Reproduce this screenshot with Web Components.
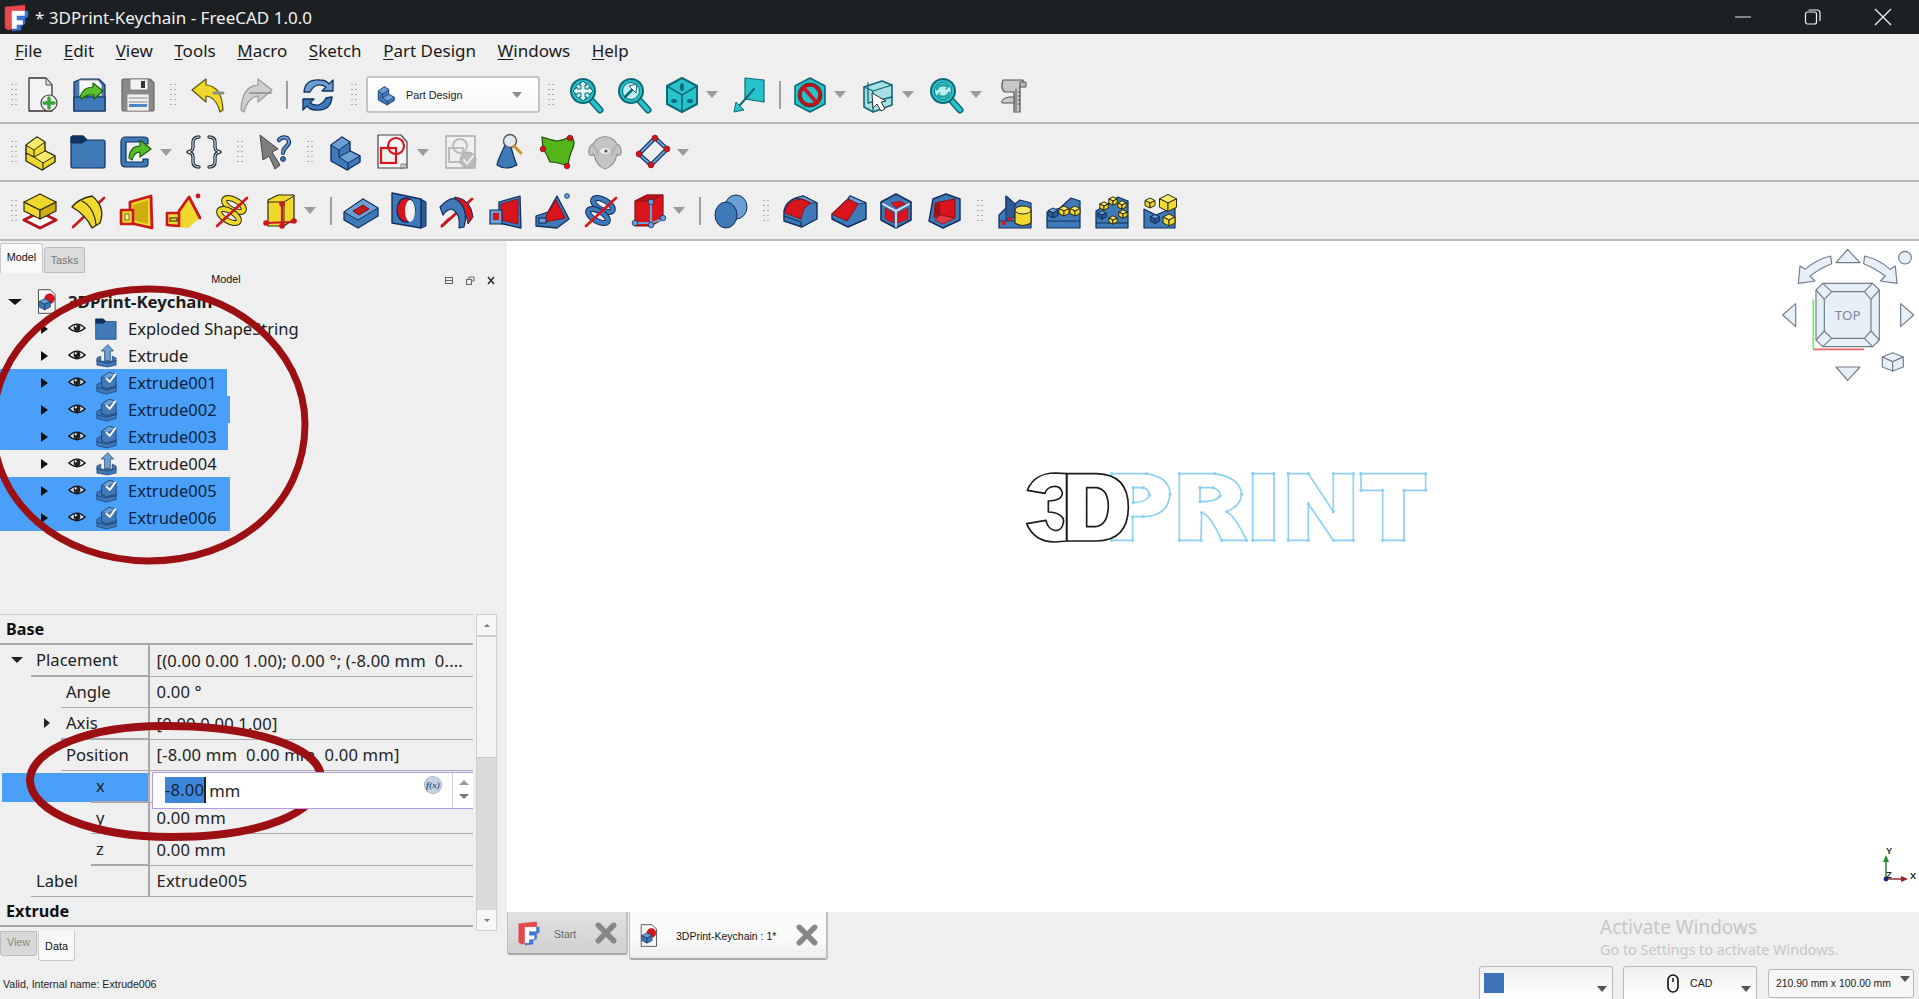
<!DOCTYPE html>
<html>
<head>
<meta charset="utf-8">
<title>FreeCAD</title>
<style>
  html, body { margin: 0; height: 100%; overflow: hidden; background: #efefef; }
  body { display: flex; flex-direction: column; font-family: "Noto Sans", "Liberation Sans", sans-serif; color: #111; }
  .main { display: flex; flex: 1; min-height: 0; }
  .center { display: flex; flex-direction: column; flex: 1; min-width: 0; }
</style>
</head>
<body>
<fc-titlebar title-text="* 3DPrint-Keychain - FreeCAD 1.0.0"></fc-titlebar>
<fc-menubar items="File,Edit,View,Tools,Macro,Sketch,Part Design,Windows,Help"></fc-menubar>

<fc-toolbar pad="18" h="57">
  <fc-tool icon="new"></fc-tool><fc-tool icon="open"></fc-tool><fc-tool icon="save"></fc-tool>
  <fc-handle w="22"></fc-handle>
  <fc-tool icon="undo"></fc-tool><fc-tool icon="redo"></fc-tool>
  <fc-sep w="14"></fc-sep>
  <fc-tool icon="refresh"></fc-tool>
  <fc-handle w="24"></fc-handle>
  <fc-combo text="Part Design"></fc-combo>
  <fc-handle w="22"></fc-handle>
  <fc-tool icon="fit"></fc-tool><fc-tool icon="fitsel"></fc-tool><fc-tool icon="iso" drop></fc-tool><fc-tool icon="plane"></fc-tool>
  <fc-sep w="12"></fc-sep>
  <fc-tool icon="noshow" drop></fc-tool><fc-tool icon="boxsel" drop></fc-tool><fc-tool icon="syncview" drop></fc-tool><fc-tool icon="measure"></fc-tool>
</fc-toolbar>

<fc-toolbar pad="16" h="58">
  <fc-tool icon="part"></fc-tool><fc-tool icon="group"></fc-tool><fc-tool icon="link" drop></fc-tool><fc-tool icon="braces"></fc-tool>
  <fc-handle w="23"></fc-handle>
  <fc-tool icon="whatsthis"></fc-tool>
  <fc-handle w="22"></fc-handle>
  <fc-tool icon="body"></fc-tool><fc-tool icon="sketch" drop></fc-tool><fc-tool icon="attach"></fc-tool><fc-tool icon="datum"></fc-tool><fc-tool icon="green"></fc-tool><fc-tool icon="sheep"></fc-tool><fc-tool icon="diamond" drop></fc-tool>
</fc-toolbar>

<fc-toolbar pad="16" h="59">
  <fc-tool icon="pad"></fc-tool><fc-tool icon="revolve"></fc-tool><fc-tool icon="loft"></fc-tool><fc-tool icon="pipe"></fc-tool><fc-tool icon="helix"></fc-tool><fc-tool icon="prim" drop></fc-tool>
  <fc-sep w="13"></fc-sep>
  <fc-tool icon="pocket"></fc-tool><fc-tool icon="hole"></fc-tool><fc-tool icon="groove"></fc-tool><fc-tool icon="subloft"></fc-tool><fc-tool icon="subpipe"></fc-tool><fc-tool icon="subhelix"></fc-tool><fc-tool icon="subprim" drop></fc-tool>
  <fc-sep w="14"></fc-sep>
  <fc-tool icon="boolean"></fc-tool>
  <fc-handle w="21"></fc-handle>
  <fc-tool icon="fillet"></fc-tool><fc-tool icon="chamfer"></fc-tool><fc-tool icon="draft"></fc-tool><fc-tool icon="thick"></fc-tool>
  <fc-handle w="24"></fc-handle>
  <fc-tool icon="mirror"></fc-tool><fc-tool icon="linear"></fc-tool><fc-tool icon="polar"></fc-tool><fc-tool icon="multi"></fc-tool>
</fc-toolbar>

<div class="main">
  <fc-panel>
    <fc-tree-row slot="tree" root icon="doc" text="3DPrint-Keychain"></fc-tree-row>
    <fc-tree-row slot="tree" icon="folder" text="Exploded ShapeString"></fc-tree-row>
    <fc-tree-row slot="tree" icon="extrude" text="Extrude"></fc-tree-row>
    <fc-tree-row slot="tree" icon="extrudeok" text="Extrude001" sel="227"></fc-tree-row>
    <fc-tree-row slot="tree" icon="extrudeok" text="Extrude002" sel="230"></fc-tree-row>
    <fc-tree-row slot="tree" icon="extrudeok" text="Extrude003" sel="228"></fc-tree-row>
    <fc-tree-row slot="tree" icon="extrude" text="Extrude004"></fc-tree-row>
    <fc-tree-row slot="tree" icon="extrudeok" text="Extrude005" sel="230"></fc-tree-row>
    <fc-tree-row slot="tree" icon="extrudeok" text="Extrude006" sel="230"></fc-tree-row>

    <fc-prop-row slot="props" group label="Base"></fc-prop-row>
    <fc-prop-row slot="props" label="Placement" indent="31" arrow="open" value="[(0.00 0.00 1.00); 0.00 °; (-8.00 mm  0...."></fc-prop-row>
    <fc-prop-row slot="props" label="Angle" indent="61" value="0.00 °"></fc-prop-row>
    <fc-prop-row slot="props" label="Axis" indent="61" arrow="closed" value="[0.00 0.00 1.00]"></fc-prop-row>
    <fc-prop-row slot="props" label="Position" indent="61" value="[-8.00 mm  0.00 mm  0.00 mm]"></fc-prop-row>
    <fc-prop-row slot="props" label="x" indent="91" selected><fc-spin-edit value="-8.00" unit="mm"></fc-spin-edit></fc-prop-row>
    <fc-prop-row slot="props" label="y" indent="91" value="0.00 mm"></fc-prop-row>
    <fc-prop-row slot="props" label="z" indent="91" value="0.00 mm"></fc-prop-row>
    <fc-prop-row slot="props" label="Label" indent="31" value="Extrude005"></fc-prop-row>
    <fc-prop-row slot="props" group label="Extrude"></fc-prop-row>
  </fc-panel>
  <div class="center">
    <fc-viewport></fc-viewport>
    <fc-doc-tabs>
      <fc-doc-tab icon="logo" text="Start"></fc-doc-tab>
      <fc-doc-tab icon="doc" text="3DPrint-Keychain : 1*" active></fc-doc-tab>
    </fc-doc-tabs>
  </div>
</div>
<fc-statusbar text="Valid, Internal name: Extrude006"></fc-statusbar>

<script>
const BD = '#10305f', B = '#3f79b8', B2 = '#6c9fd3', Y = '#f0d82c', Y2 = '#cfae14', YL = '#f7e96a', YD = '#2c2a10', R = '#d9141c', T = '#27c3cd', TD = '#0e6a74', GR = '#8f8f8f';
const S = (d, f, s = BD, w = 1.4) => `<path d="${d}" fill="${f}" stroke="${s}" stroke-width="${w}" stroke-linejoin="round"/>`;
const L = (d, s, w = 1.5) => `<path d="${d}" fill="none" stroke="${s}" stroke-width="${w}" stroke-linecap="round" stroke-linejoin="round"/>`;
const C = (x, y, r, f, s = 'none', w = 1) => `<circle cx="${x}" cy="${y}" r="${r}" fill="${f}" stroke="${s}" stroke-width="${w}"/>`;
const mag = inner => L('M24 24 L32 33', TD, 7) + L('M24 24 L32 33', T, 4) + C(15, 14, 12, T, TD, 2) + C(15, 14, 8.5, '#bdeef0', TD, 1) + inner;
const HEX = 'M18 1 L33 9 V27 L18 35 L3 27 V9Z';
const block = (f, f2, k) => S('M4 11 L15 3 L23 8 V17 L33 22 V28 L20 36 L4 27Z', f, k, 1.4) + S('M4 11 L15 3 L23 8 L12 16Z', f2, k, 1) + S('M12 23 L23 17 L33 22 L21 29Z', f2, k, 1) + L('M12 16 V23 M21 29 V36', k, 1.1);
const CUBE = (x, y, s, f, f2, k, w = 1) => S(`M${x} ${y - s} L${x + s} ${y - s / 2} L${x} ${y} L${x - s} ${y - s / 2}Z`, f2, k, w) + S(`M${x - s} ${y - s / 2} L${x} ${y} V${y + s} L${x - s} ${y + s / 2}Z`, f, k, w) + S(`M${x + s} ${y - s / 2} L${x} ${y} V${y + s} L${x + s} ${y + s / 2}Z`, f, k, w);
const helix = (k, f) => `<ellipse cx="20" cy="12" rx="11" ry="5" transform="rotate(30 20 12)" fill="none" stroke="${k}" stroke-width="6"/><ellipse cx="20" cy="12" rx="11" ry="5" transform="rotate(30 20 12)" fill="none" stroke="${f}" stroke-width="4"/><ellipse cx="15" cy="23" rx="11" ry="5" transform="rotate(30 15 23)" fill="none" stroke="${k}" stroke-width="6"/><ellipse cx="15" cy="23" rx="11" ry="5" transform="rotate(30 15 23)" fill="none" stroke="${f}" stroke-width="4"/>`;

const ICONS = {
  logo: S('M2 3 L22 1 V7 H9 V25 L5 26 L2 24Z', '#e8474c', '#d3353a', .5) + S('M9 7 H22 V12 H14 V16 H20 V21 H14 V25 H9Z', '#fff', '#fff', .5) + S('M22 7 H25 V13 L22 14 V20 L18 22 V26 L9 27 V25 H14 V21 H20 V16 H14 V12 H22Z', '#3c78d8', '#2e62b5', .5),
  new: S('M5 1 H22 L28 8 V34 H5Z', '#f3f3f3', '#333', 1.3) + S('M22 1 V8 H28Z', '#ddd', '#555', 1) + C(25, 26, 8, '#eee', '#444', 1.2) + L('M25 21 V31 M20 26 H30', '#39a43a', 3.4),
  open: S('M2 5 L9 2 H27 L33 8 V34 H2Z', B, BD, 1.2) + S('M7 3 H26 L30 8 V19 H7Z', '#f7f7f7', '#777', .8) + S('M2 20 H33 V34 H2Z', B, BD, 1.2) + S('M8 20 Q11 10 21 10 V6 L31 14 L22 22 V18 Q14 17 10 22Z', '#5cc02e', '#1f5c10', 1.2),
  save: S('M2 4 Q2 2 4 2 H30 L34 6 V32 Q34 34 32 34 H4 Q2 34 2 32Z', '#8a8a8a', '#666', 1.2) + S('M10 2 H28 V13 H10Z', '#f2f2f2', '#777', .8) + `<rect x="21" y="4" width="4" height="7" fill="#333"/>` + S('M7 17 H29 V34 H7Z', '#eee', '#888', .8) + L('M9 21 H27 M9 25 H27', '#888', 1) + `<rect x="9" y="27" width="18" height="3" fill="#4d86c5"/>`,
  undo: S('M2 13 L16 2 V8 Q32 9 33 33 L30 35 Q26 20 16 19 V25Z', Y, '#5a5115', 1.2) + L('M24 16 H33', GR, 3),
  redo: S('M34 13 L20 2 V8 Q4 9 3 33 L6 35 Q10 20 20 19 V25Z', '#cfcfcf', '#9a9a9a', 1.2) + L('M12 16 H33', '#9a9a9a', 2),
  refresh: S('M4 15 Q5 2 20 3 Q26 3 29 7 L33 3 V14 H22 L26 10 Q16 4 10 15Z', B2, BD, 1.3) + S('M32 20 Q31 34 16 33 Q10 33 7 29 L3 33 V22 H14 L10 26 Q20 32 26 21Z', B, BD, 1.3),
  fit: mag(S('M15 4 L19 8 H17 V12 H21 V10 L25 14 L21 18 V16 H17 V20 H19 L15 24 L11 20 H13 V16 H9 V18 L5 14 L9 10 V12 H13 V8 H11Z', '#e4f8f9', TD, 1)),
  fitsel: mag(L('M9 20 L18 11', TD, 2.5) + S('M21 7 L20 16 L13 9Z', '#fff', TD, 1)),
  iso: S(HEX, T, TD, 2) + L('M18 18 L3 9 M18 18 L33 9 M18 18 V35', TD, 1.5) + `<ellipse cx="18" cy="10" rx="2" ry="4" fill="${TD}"/><ellipse cx="10" cy="24" rx="3" ry="2" fill="${TD}"/><ellipse cx="26" cy="24" rx="3" ry="2" fill="${TD}"/>`,
  plane: S('M13 1 L32 3 V25 L13 22Z', T, TD, 1.2) + L('M22 12 L8 28', TD, 2) + S('M2 35 L4 25 L12 33Z', T, TD, 1),
  noshow: S(HEX, T, TD, 1.6) + C(18, 18, 12, '#1f7f8e', '#123', .8) + C(18, 18, 10, T, '#b5151b', 3.6) + L('M11 10 L25 26', '#c8161c', 3.6),
  boxsel: S('M4 10 L22 4 L32 8 V28 L13 35 L4 30Z', '#a9dfe4', TD, 1.6) + L('M4 10 L13 14 L32 8 M13 14 V35 M8 6 V26 L32 20', TD, 1.3) + S('M12 16 L13 31 L17 27 L21 34 L25 32 L21 25 L26 24Z', '#fff', '#333', 1),
  syncview: mag(L('M9 12 Q11 6 20 9 M21 16 Q19 22 10 19', '#2aa', 3) + L('M18 6 L21 9 L18 12 M12 16 L9 19 L12 22', '#2aa', 1.5)),
  measure: S('M7 3 H27 V9 H24 V35 H18 V15 H9 Q4 12 7 3Z', '#c8c8c8', '#555', 1.2) + S('M13 20 H18 V26 H6 Q4 22 13 20Z', '#c8c8c8', '#555', 1) + L('M20 12 V33 M22 15 H24 M22 19 H24 M22 23 H24 M22 27 H24', '#555', 1) + S('M24 5 H30 V10 H24Z', '#bbb', '#555', 1),
  part: block(Y, YL, YD) + L('M4 19 L12 23', YD, 1.1),
  group: S('M1 4 Q1 2 3 2 H13 L17 6 H33 Q35 6 35 8 V32 Q35 34 33 34 H3 Q1 34 1 32Z', B, BD, 1.2) + S('M1 4 Q1 2 3 2 H13 L17 6 L12 9 H1Z', BD, BD, 1),
  link: S('M30 10 V6 Q30 3 26 3 H8 Q3 3 3 8 V28 Q3 33 8 33 H26 Q30 33 30 29 V25 H25 V28 H8 V8 H25 V10Z', B, BD, 1.2) + S('M11 24 Q12 12 22 12 V6 L33 15 L22 23 V18 Q16 18 14 26Z', '#58bd2d', '#1f5c10', 1.2),
  braces: L('M13 3 Q7 3 7 8 V13 Q7 17 2 18 Q7 19 7 23 V28 Q7 33 13 33', '#223344', 3.4) + L('M13 3 Q7 3 7 8 V13 Q7 17 2 18 Q7 19 7 23 V28 Q7 33 13 33', '#f0f0f0', 1) + L('M23 3 Q29 3 29 8 V13 Q29 17 34 18 Q29 19 29 23 V28 Q29 33 23 33', '#223344', 3.4) + L('M23 3 Q29 3 29 8 V13 Q29 17 34 18 Q29 19 29 23 V28 Q29 33 23 33', '#f0f0f0', 1),
  whatsthis: S('M3 1 L21 15 L15 18 L23 31 L18 35 L12 22 L6 26Z', '#7d7d7d', '#444', 1) + L('M22 6 Q25 2 30 4 Q34 8 30 12 Q26 15 26 19', '#10305f', 4.2) + L('M22 6 Q25 2 30 4 Q34 8 30 12 Q26 15 26 19', B2, 2) + C(26, 25, 2.4, B, BD, 1),
  body: block(B, B2, BD),
  sketch: S('M3 1 H26 L32 8 V34 H3Z', '#f5f5f5', '#444', 1.2) + S('M26 30 H32 L26 35Z', '#ddd', '#666', .8) + `<rect x="6" y="14" width="15" height="15" fill="#eee" stroke="${R}" stroke-width="2.2"/>` + C(21, 12, 8, 'none', R, 2.2),
  attach: S('M3 2 H32 V34 H3Z', '#efefef', '#aaa', 1.4) + `<rect x="6" y="14" width="14" height="14" fill="none" stroke="#bdbdbd" stroke-width="2"/>` + C(17, 12, 7, 'none', '#bdbdbd', 2) + C(25, 26, 8, '#bcbcbc', '#aaa', 1) + L('M21 26 L24 30 L30 22', '#eee', 2),
  datum: S('M15 9 Q6 28 6 31 Q15 37 26 31 Q24 28 19 9Z', B, BD, 1.2) + C(19, 7, 6.5, '#dfe9ef', '#555', 1.4) + L('M23 12 L30 19', '#c79425', 3),
  green: S('M3 3 Q12 6 18 7 Q26 6 31 2 Q37 6 34 14 Q30 22 29 32 Q18 28 11 28 Q8 20 4 15Z', '#56b41b', '#1e4a10', 1.2) + C(4, 15, 2.8, R, '#6a1010', .7) + C(31, 4, 2.8, R, '#6a1010', .7) + C(28, 32, 2.8, R, '#6a1010', .7),
  sheep: S('M9 6 Q18 -1 27 6 L30 10 Q35 12 34 20 Q32 23 30 20 Q28 32 18 35 Q9 32 7 20 Q4 23 2 20 Q1 12 6 10Z', '#c4c4c4', '#8e8e8e', 1.1) + `<ellipse cx="18" cy="17" rx="5" ry="3" fill="#eee"/>` + C(19, 17, 1.6, '#555') + L('M6 11 Q10 15 11 21 M30 11 Q26 15 25 21', '#a8a8a8', 1.2),
  diamond: L('M20 4 L32 15 L16 31 L4 20Z', BD, 4.4) + L('M20 4 L32 15 L16 31 L4 20Z', B2, 2) + C(20, 4, 2.9, R, '#6a1010', .6) + C(32, 15, 2.9, R, '#6a1010', .6) + C(16, 31, 2.9, R, '#6a1010', .6) + C(4, 20, 2.9, R, '#6a1010', .6),
  pad: S('M2 27 L18 19 L34 27 L18 35Z', '#fff', '#b5141a', 3) + S('M2 9 L18 17 V26 L2 18Z', Y, YD, 1.2) + S('M34 9 L18 17 V26 L34 18Z', Y2, YD, 1.2) + S('M18 1 L34 9 L18 17 L2 9Z', Y, YD, 1.2),
  revolve: L('M3 34 L34 5', '#c9181e', 2.6) + S('M2 14 Q8 6 22 3 Q36 14 30 30 L22 35 Q16 22 2 14Z', Y, YD, 1.3) + L('M12 8 Q24 14 26 32', YD, 1.2),
  loft: S('M12 9 L33 3 L34 35 L12 30Z', Y, '#c9181e', 2.8) + S('M15 12 L30 7 L30 31 L15 27Z', Y2, 'none', 0) + S('M3 17 H15 V31 H3Z', Y, '#c9181e', 2.6) + `<rect x="7" y="21" width="4" height="6" fill="#f7f0a0" stroke="${YD}" stroke-width=".6"/>`,
  pipe: S('M1 22 L13 20 L22 4 L34 25 L22 35 L1 33Z', Y, '#c9181e', 0) + L('M13 18 L23 4 L34 25', '#c9181e', 2.8) + S('M1 20 H13 V33 L1 32Z', Y, '#c9181e', 2.6) + C(32, 3, 2.4, '#c9181e') + `<rect x="4" y="25" width="7" height="3" fill="none" stroke="#222" stroke-width="1"/>`,
  helix: helix(YD, Y) + L('M3 33 L33 5', '#c9181e', 2.6),
  prim: S('M6 7 L16 2 H32 V26 L22 33 H6Z', Y, YD, 1.2) + L('M6 9 H22 L32 3 M22 9 V33', YD, 1) + L('M3 30 L32 29 M20 10 V33', '#c9181e', 2.2) + C(4, 30, 2.8, '#c9181e') + C(20, 11, 2.8, '#c9181e') + C(20, 33, 2.8, '#c9181e') + C(32, 28, 2.8, '#c9181e'),
  pocket: S('M1 19 L20 6 L35 15 V23 L15 35 L1 27Z', B, BD, 1.3) + S('M1 19 L20 6 L35 15 L15 27Z', B2, BD, 1) + S('M10 18 L20 12 L26 16 L16 22Z', '#c9181e', '#7a0d10', 1),
  hole: S('M30 6 L35 9 V33 L30 35Z', '#2d5d94', BD, 1) + S('M1 0 L30 6 V35 L1 30Z', B, BD, 1.4) + `<ellipse cx="15" cy="17" rx="9" ry="12" fill="#d9141c" stroke="${BD}" stroke-width="1.3"/><ellipse cx="19" cy="18" rx="5" ry="11" fill="#f2f2f2"/>`,
  groove: L('M3 33 L33 6', '#c9181e', 2.8) + S('M16 4 Q32 6 34 24 L29 31 Q27 13 12 8Z', '#d9141c', BD, 1) + S('M1 14 Q12 2 18 7 Q30 16 25 34 L20 35 Q22 20 12 16 Q6 18 4 22Z', B, BD, 1.2) + L('M3 33 L10 26', '#c9181e', 2.8),
  subloft: S('M12 9 L33 3 L34 35 L12 30Z', B, BD, 1.3) + S('M14 11 L31 6 L31 31 L14 27Z', R, '#8a1015', .8) + S('M3 17 H15 V31 H3Z', B2, BD, 1.2) + `<rect x="6" y="20" width="6" height="7" fill="${R}"/>`,
  subpipe: S('M1 23 L13 19 L22 3 L34 26 L22 35 L1 33Z', B, BD, 1.3) + S('M12 21 L21 7 L30 25 L10 29Z', R, '#8a1015', 1) + C(32, 3, 2.4, B2, BD, .8) + `<rect x="4" y="25" width="7" height="5" fill="${B2}" stroke="${BD}" stroke-width="1.2"/>`,
  subhelix: helix(BD, B) + L('M3 33 L33 5', R, 2.6),
  subprim: S('M4 8 L16 2 H32 V26 L20 33 H4Z', R, '#8a1015', 1.2) + S('M4 8 L16 2 H32 L20 8Z', '#b91219', '#8a1015', .8) + L('M4 30 H20 V10 M20 30 L32 26', B2, 2.2) + C(20, 9, 2.8, B2, BD, .8) + C(4, 30, 2.8, B2, BD, .8) + C(20, 32, 2.8, B2, BD, .8) + C(32, 25, 2.8, B2, BD, .8),
  boolean: `<ellipse cx="23" cy="14" rx="11" ry="12" fill="${B2}" stroke="${BD}" stroke-width="1"/><ellipse cx="13" cy="22" rx="11" ry="13" fill="${B}" stroke="${BD}" stroke-width="1"/>`,
  fillet: S('M2 18 Q4 8 14 5 L21 3 L35 10 V26 L20 34 L2 28Z', B, BD, 1.4) + S('M14 5 L21 3 L35 10 L29 10 L20 6Z', B2, BD, .8) + S('M3 20 Q4 9 14 7 L20 6 L29 10 Q21 13 19 26Z', R, '#8a1015', 1) + L('M2 23 L19 29 V34', BD, 1.1),
  chamfer: S('M2 21 L18 6 L20 3 L36 10 V26 L18 34 L2 26Z', B, BD, 1.4) + S('M20 3 L36 10 L28 11 L18 6Z', B2, BD, .8) + S('M2 21 L18 6 L28 11 L17 28Z', R, '#8a1015', 1),
  draft: S(HEX, B, BD, 1.6) + L('M5 11 L18 18 V34 M18 18 L31 11', '#e8e8e8', 1.6) + S('M7 15 L16 20 V30 L7 26Z', R, '#8a1015', .6) + S('M20 20 L30 15 V26 L20 30Z', R, '#8a1015', .6) + S('M13 10 L22 8 L27 11 L18 15Z', R, '#8a1015', .6),
  thick: S('M3 28 L7 6 L20 1 L34 6 V27 L17 35Z', B, BD, 1.4) + S('M13 9 L29 6 V25 L14 22Z', R, '#8a1015', 1) + S('M14 22 L29 25 L17 31 L9 27Z', '#e33a3f', '#8a1015', .8) + S('M9 10 L13 9 L14 22 L8 25Z', '#a31118', '#8a1015', .8),
  mirror: S('M1 35 V22 L8 15 V3 L17 11 L22 7 L33 10 V35Z', B, BD, 1.2) + S('M8 3 L17 11 V24 L8 27Z', '#2d5d94', BD, 1) + L('M1 28 L33 28', BD, 1) + S('M17 17 Q25 11 33 17 V30 Q25 35 17 30Z', Y, YD, 1.1) + `<ellipse cx="25" cy="17" rx="8" ry="4" fill="${YL}" stroke="${YD}" stroke-width="1"/>` + C(6, 30, 2.2, R) + C(12, 26, 2, R),
  linear: S('M1 35 V19 L14 15 L25 5 L34 8 V35Z', B, BD, 1.2) + L('M1 28 L34 28', BD, 1) + CUBE(7, 20, 5, '#2d5d94', B2, BD) + CUBE(18, 18, 5, Y, YL, YD) + CUBE(29, 18, 5, Y, YL, YD),
  polar: S('M2 35 V18 L12 12 L24 4 L34 8 V35Z', B, BD, 1.2) + L('M2 30 L34 30', BD, 1) + CUBE(8, 22, 4.2, '#2d5d94', B2, BD) + CUBE(10, 13, 4.2, Y, YL, YD) + CUBE(19, 8, 4.2, Y, YL, YD) + CUBE(28, 12, 4.2, Y, YL, YD) + CUBE(29, 21, 4.2, Y, YL, YD) + CUBE(19, 27, 4.2, Y, YL, YD),
  multi: S('M2 35 V16 L14 22 L33 14 V35Z', B, BD, 1.2) + CUBE(8, 10, 5, Y, YL, YD) + CUBE(26, 10, 8.5, Y, YL, YD) + CUBE(13, 26, 4.5, '#2d5d94', B2, BD) + CUBE(27, 27, 6, Y, YL, YD),
  doc: S('M5 1 H22 L29 8 V35 H5Z', '#f6f6f6', '#333', 1.2) + C(21, 14, 7, '#d9141c', '#7a0d10', .8) + CUBE(14, 22, 8, B, B2, BD),
  folder: S('M1 3 H13 L17 7 H33 V35 H1Z', B, BD, 1) + S('M1 3 H13 L17 7 L13 10 H1Z', BD, BD, .6),
  extrude: S('M3 22 L9 19 V27 L27 27 V19 L33 22 V33 L20 36 L3 33Z', B, BD, 1) + L('M3 26 L20 30 L33 26', BD, 1) + S('M20 1 L29 11 H24 V26 H15 V11 H10Z', B2, BD, 1),
  extrudeok: S('M3 21 L11 17 V26 H27 V17 L33 21 V32 L18 36 L3 32Z', B, BD, 1) + L('M3 26 L18 30 L33 26', BD, 1) + S('M10 10 L22 2 L33 5 V24 L18 28 L10 24Z', B, BD, 1) + S('M10 10 L22 2 L33 5 L20 12Z', B2, BD, .8) + L('M18 12 L23 17 L32 5', '#fff', 3),
  eye: `<path d="M1 9 Q10 0 19 9 Q10 17 1 9Z" fill="#fff" fill-opacity=".7" stroke="#111" stroke-width="1.5"/><circle cx="10" cy="8.5" r="3.8" fill="#222"/><circle cx="8.6" cy="7" r="1.2" fill="#fff"/>`,
  mouse: `<rect x="3" y="1" width="10" height="17" rx="5" fill="none" stroke="#111" stroke-width="1.6"/><path d="M8 4 V8" stroke="#111" stroke-width="1.5"/>`,
  x: L('M3 3 L17 17 M17 3 L3 17', '#878787', 5)
};

class FcIcon extends HTMLElement {
  connectedCallback() {
    const size = this.getAttribute("size") || 36;
    const box = this.getAttribute("box") || 36;
    this.attachShadow({ mode: "open" });
    this.shadowRoot.innerHTML = `
      <style>:host { display: block; width: ${size}px; height: ${size}px; flex: none; } svg { display: block; overflow: visible; }</style>
      <svg width="${size}" height="${size}" viewBox="0 0 ${box} ${box}">${ICONS[this.getAttribute("name")] || ""}</svg>`;
  }
}
customElements.define("fc-icon", FcIcon);

class FcTitlebar extends HTMLElement {
  constructor() {
    super();
    this.attachShadow({ mode: "open" });
    this.shadowRoot.innerHTML = `
      <style>
        :host { display: flex; align-items: center; height: 34px; flex: none; background: #1c2023; color: #f2f2f2; font: 17px "Noto Sans", sans-serif; }
        fc-icon { margin: 0 5px 0 3px; }
        span { flex: 1; }
        .b { width: 70px; display: flex; justify-content: center; }
      </style>
      <fc-icon name="logo" size="27" box="27"></fc-icon>
      <span>${this.getAttribute("title-text")}</span>
      <div class="b"><svg width="18" height="18" stroke="#e8e8e8" fill="none"><path d="M1 9H17"/></svg></div>
      <div class="b"><svg width="18" height="18" stroke="#f0f0f0" fill="none" stroke-width="1.2"><rect x="1.5" y="4" width="11" height="12" rx="2"/><path d="M4.5 2H13Q16 2 16 5V13"/></svg></div>
      <div class="b" style="margin-right:1px"><svg width="18" height="18" stroke="#f0f0f0" fill="none" stroke-width="1.3"><path d="M1 1L17 17M17 1L1 17"/></svg></div>`;
  }
}
customElements.define("fc-titlebar", FcTitlebar);

class FcMenubar extends HTMLElement {
  constructor() {
    super();
    this.attachShadow({ mode: "open" });
    const items = this.getAttribute("items").split(",").map(t => `<span><u>${t[0]}</u>${t.slice(1)}</span>`).join("");
    this.shadowRoot.innerHTML = `
      <style>
        :host { display: flex; align-items: center; gap: 21.5px; height: 33px; flex: none; padding-left: 15px; font: 17px "Noto Sans", sans-serif; color: #1a1a1a; }
        u { text-underline-offset: 2px; text-decoration-thickness: 1px; }
      </style>${items}`;
  }
}
customElements.define("fc-menubar", FcMenubar);

class FcToolbar extends HTMLElement {
  constructor() {
    super();
    this.attachShadow({ mode: "open" });
    this.shadowRoot.innerHTML = `
      <style>
        :host { display: flex; align-items: center; flex: none; box-sizing: border-box; height: ${this.getAttribute("h")}px; padding-left: ${this.getAttribute("pad")}px; border-bottom: 2px solid #b8b8b8; position: relative; }
        .first { position: absolute; left: 10px; top: 50%; margin-top: -13px; width: 8px; height: 26px; background: radial-gradient(circle, #ababab 0.9px, transparent 1.1px) 0 0 / 4px 5px; }
      </style><div class="first"></div><slot></slot>`;
  }
}
customElements.define("fc-toolbar", FcToolbar);

class FcTool extends HTMLElement {
  connectedCallback() {
    const drop = this.hasAttribute("drop");
    this.attachShadow({ mode: "open" });
    this.shadowRoot.innerHTML = `
      <style>
        :host { display: flex; align-items: center; width: ${drop ? 68 : 48}px; flex: none; }
        .i { width: 48px; display: flex; justify-content: center; }
        .a { width: 0; height: 0; border: 6px solid transparent; border-top: 7px solid #9b9b9b; border-bottom: 0; }
      </style>
      <div class="i"><fc-icon name="${this.getAttribute("icon")}"></fc-icon></div>${drop ? '<div class="a"></div>' : ""}`;
  }
}
customElements.define("fc-tool", FcTool);

class FcHandle extends HTMLElement {
  connectedCallback() {
    this.attachShadow({ mode: "open" });
    this.shadowRoot.innerHTML = `
      <style>
        :host { display: flex; justify-content: center; flex: none; width: ${this.getAttribute("w")}px; }
        div { width: 8px; height: 26px; background: radial-gradient(circle, #ababab 0.9px, transparent 1.1px) 0 0 / 4px 5px; }
      </style><div></div>`;
  }
}
customElements.define("fc-handle", FcHandle);

class FcSep extends HTMLElement {
  connectedCallback() {
    this.attachShadow({ mode: "open" });
    this.shadowRoot.innerHTML = `
      <style>
        :host { display: flex; justify-content: center; flex: none; width: ${this.getAttribute("w")}px; }
        div { width: 2px; height: 28px; background: #9f9f9f; }
      </style><div></div>`;
  }
}
customElements.define("fc-sep", FcSep);

class FcCombo extends HTMLElement {
  connectedCallback() {
    this.attachShadow({ mode: "open" });
    this.shadowRoot.innerHTML = `
      <style>
        :host { display: flex; align-items: center; flex: none; box-sizing: border-box; width: 174px; height: 37px; background: linear-gradient(#fff, #f6f6f6); border: 2px solid #c4c4c4; border-radius: 3px; padding-left: 8px; font: 10.8px "Liberation Sans", sans-serif; color: #222; }
        span { margin-left: 10px; flex: 1; }
        .a { width: 0; height: 0; border: 5px solid transparent; border-top: 6px solid #8e8e8e; border-bottom: 0; margin-right: 16px; }
      </style>
      <fc-icon name="body" size="20"></fc-icon><span>${this.getAttribute("text")}</span><div class="a"></div>`;
  }
}
customElements.define("fc-combo", FcCombo);

class FcPanel extends HTMLElement {
  constructor() {
    super();
    this.attachShadow({ mode: "open" });
    this.shadowRoot.innerHTML = `
      <style>
        :host { display: flex; flex-direction: column; width: 507px; flex: none; position: relative; overflow: hidden; background: #efefef; }
        .tabs { display: flex; align-items: flex-end; height: 32px; flex: none; font: 10.8px "Liberation Sans", sans-serif; }
        .tab { display: flex; align-items: center; justify-content: center; box-sizing: border-box; }
        .on { width: 43px; height: 30px; background: #f8f8f8; border: 1px solid #c8c8c8; border-bottom: 0; border-radius: 3px 3px 0 0; padding-bottom: 4px; }
        .off { width: 41px; height: 26px; margin-left: 1px; background: #dcdcdc; border: 1px solid #bcbcbc; border-radius: 3px 3px 0 0; color: #777; }
        .head { display: flex; align-items: center; justify-content: center; box-sizing: border-box; height: 15px; flex: none; font: 10.8px "Liberation Sans", sans-serif; position: relative; padding: 0 55px 3px 0; }
        .head svg { position: absolute; top: 3px; }
        .tree { height: 326px; flex: none; }
        .props { display: flex; flex: none; height: 317px; }
        .grid { width: 473px; flex: none; border-top: 1px solid #d0d0d0; box-sizing: border-box; overflow: hidden; position: relative; }
        .scroll { display: flex; flex-direction: column; width: 21px; margin-left: 3px; background: #d9d9d9; border: 1px solid #cfcfcf; box-sizing: border-box; }
        .sb { height: 20px; background: #f7f7f7; display: flex; align-items: center; justify-content: center; flex: none; }
        .thumb { height: 123px; background: #f4f4f4; flex: none; border-top: 2px solid #cfcfcf; border-bottom: 1px solid #c8c8c8; box-sizing: border-box; }
        .fill { flex: 1; }
        .btabs { display: flex; align-items: flex-start; height: 32px; flex: none; font: 10.8px "Liberation Sans", sans-serif; }
        .bv { width: 37px; height: 25px; background: #d8d8d8; border: 1px solid #bcbcbc; border-radius: 0 0 3px 3px; color: #888; box-sizing: border-box; padding-bottom: 3px; }
        .bd { width: 37px; height: 30px; margin-left: 1px; background: #f8f8f8; border: 1px solid #c8c8c8; border-top: 0; border-radius: 0 0 3px 3px; box-sizing: border-box; }
        .rings { position: absolute; left: 0; top: 0; pointer-events: none; }
      </style>
      <div class="tabs"><div class="tab on">Model</div><div class="tab off">Tasks</div></div>
      <div class="head">Model
        <svg style="left:444px" width="10" height="9" stroke="#666" fill="none"><rect x="1.5" y="1.5" width="7" height="6"/><path d="M1.5 4.5H8.5"/></svg>
        <svg style="left:465px" width="10" height="9" stroke="#666" fill="none"><rect x="1.5" y="3.5" width="5" height="5"/><path d="M4 3V1H9V5H7"/></svg>
        <svg style="left:486px" width="10" height="9" stroke="#333" stroke-width="1.6" fill="none"><path d="M2 1L8 8M8 1L2 8"/></svg>
      </div>
      <div class="tree"><slot name="tree"></slot></div>
      <div class="props">
        <div class="grid"><slot name="props"></slot></div>
        <div class="scroll">
          <div class="sb"><svg width="8" height="5"><path d="M4 1L7 4H1Z" fill="#777"/></svg></div>
          <div class="thumb"></div><div class="fill"></div>
          <div class="sb"><svg width="8" height="5"><path d="M4 4L7 1H1Z" fill="#777"/></svg></div>
        </div>
      </div>
      <div class="btabs"><div class="tab bv">View</div><div class="tab bd">Data</div></div>
      <svg class="rings" width="507" height="722" fill="none" stroke="#9c1014" stroke-linecap="round">
        <path stroke-width="7" d="M148 48 C232 47 305 108 305 183 C305 263 238 320 148 320 C60 319 -7 262 -7 185 C-7 108 58 48 148 48Z"/>
        <path stroke-width="8" d="M168 485 C90 484 32 508 30 538 C29 572 95 596 172 596 C260 596 322 572 321 536 C319 505 250 485 168 485Z"/>
      </svg>`;
  }
}
customElements.define("fc-panel", FcPanel);

class FcTreeRow extends HTMLElement {
  connectedCallback() {
    const root = this.hasAttribute("root");
    const sel = this.getAttribute("sel");
    this.attachShadow({ mode: "open" });
    this.shadowRoot.innerHTML = `
      <style>
        :host { display: block; height: 27px; font: ${root ? "700 16.8px" : "16.5px"} "Noto Sans", sans-serif; color: ${sel ? "#0a2340" : "#1c1c1c"}; }
        .row { display: flex; align-items: center; box-sizing: border-box; height: 27px; width: ${sel ? sel + "px" : "100%"}; background: ${sel ? "#4aa0f8" : "none"}; }
        .tw { width: 0; height: 0; border: 5px solid transparent; flex: none; }
        .closed { border-left: 7px solid #111; border-right: 0; margin-left: 41px; margin-right: 20px; }
        .open { border-top: 6px solid #111; border-bottom: 0; border-left-width: 7px; border-right-width: 7px; margin-left: 8px; margin-right: 13px; }
        .eye { margin-right: 9px; }
        .ic { margin-right: 10px; }
        .doc { margin-right: 8px; }
        span { white-space: nowrap; }
      </style>
      <div class="row">
        <div class="tw ${root ? "open" : "closed"}"></div>
        ${root ? "" : '<fc-icon class="eye" name="eye" size="18" box="20"></fc-icon>'}
        <fc-icon class="${root ? "doc" : "ic"}" name="${this.getAttribute("icon")}" size="${root ? 25 : 23}"></fc-icon>
        <span>${this.getAttribute("text")}</span>
      </div>`;
  }
}
customElements.define("fc-tree-row", FcTreeRow);

class FcPropRow extends HTMLElement {
  connectedCallback() {
    const group = this.hasAttribute("group");
    const indent = +this.getAttribute("indent") || 0;
    const arrow = this.getAttribute("arrow");
    const selected = this.hasAttribute("selected");
    this.attachShadow({ mode: "open" });
    this.shadowRoot.innerHTML = `
      <style>
        :host { display: block; height: ${group ? 30 : 31.5}px; font: 16.6px "Noto Sans", sans-serif; color: #222; position: relative; }
        .r { display: grid; grid-template-columns: 150px 1fr; height: 100%; }
        .n { box-sizing: border-box; padding: 0 0 2px ${indent + 5}px; display: flex; align-items: center; position: relative; border-right: 2px solid #a9a9a9; }
        .n::after { content: ""; position: absolute; left: ${indent}px; right: 0; bottom: 0; height: 1.5px; background: #a9a9a9; }
        .sel { background: linear-gradient(90deg, #4aa0f8, #4aa0f8) 2px 2px / 146px 29px no-repeat; }
        .v { box-sizing: border-box; padding-left: 6.5px; display: flex; align-items: center; border-bottom: 1.5px solid #a9a9a9; white-space: pre; overflow: hidden; letter-spacing: .17px; }
        .g { display: flex; align-items: center; height: 100%; box-sizing: border-box; padding-left: 6px; font-weight: 700; border-bottom: 2px solid #a9a9a9; font-size: 16.2px; color: #111; }
        .ar { position: absolute; width: 0; height: 0; border: 5px solid transparent; }
        .open { left: 11px; border-top: 6px solid #222; border-bottom: 0; border-left-width: 6px; border-right-width: 6px; }
        .closed { left: 44px; border-left: 6px solid #222; border-right: 0; }
      </style>
      ${group ? `<div class="g">${this.getAttribute("label")}</div>` : `
      <div class="r">
        <div class="n ${selected ? "sel" : ""}">${arrow ? `<div class="ar ${arrow}"></div>` : ""}${this.getAttribute("label")}</div>
        <div class="v">${this.getAttribute("value") || ""}<slot></slot></div>
      </div>`}`;
  }
}
customElements.define("fc-prop-row", FcPropRow);

class FcSpinEdit extends HTMLElement {
  connectedCallback() {
    this.attachShadow({ mode: "open" });
    this.shadowRoot.innerHTML = `
      <style>
        :host { position: absolute; left: 152px; top: 1px; width: 323px; height: 37px; box-sizing: border-box; display: flex; background: #fff; border: 1px solid #b79ae4; font: 16.6px "Noto Sans", sans-serif; color: #222; z-index: 2; }
        .t { flex: 1; display: flex; align-items: center; padding: 0 0 1px 12px; position: relative; }
        .s { background: #3f86d8; color: #12263f; border-right: 2px solid #222; height: 26px; line-height: 26px; }
        .u { margin-left: 3px; }
        .fx { position: absolute; right: 10px; top: 3px; width: 18px; height: 18px; border-radius: 50%; background: #c5d3e3; border: 1px dotted #7b90a8; box-sizing: border-box; color: #32547d; font: italic 700 9px "Liberation Serif", serif; display: flex; align-items: center; justify-content: center; }
        .spin { width: 22px; border-left: 1px solid #cfcfcf; display: flex; flex-direction: column; align-items: center; justify-content: space-around; padding: 2px 0 5px; box-sizing: border-box; }
        .spin svg { display: block; }
      </style>
      <div class="t"><span class="s">${this.getAttribute("value")}</span><span class="u">${this.getAttribute("unit")}</span><div class="fx">f(x)</div></div>
      <div class="spin">
        <svg width="12" height="7"><path d="M6 1L11 6H1Z" fill="#999"/></svg>
        <svg width="12" height="7"><path d="M6 6L11 1H1Z" fill="#777"/></svg>
      </div>`;
  }
}
customElements.define("fc-spin-edit", FcSpinEdit);

class FcViewport extends HTMLElement {
  constructor() {
    super();
    this.attachShadow({ mode: "open" });
    this.shadowRoot.innerHTML = `
      <style>
        :host { display: block; flex: 1; background: #fff; position: relative; overflow: hidden; }
        svg { position: absolute; overflow: visible; }
        text { font-family: "Noto Sans", sans-serif; }
      </style>
      <svg style="left:493px;top:200px" width="450" height="120" viewBox="0 0 1350 360" fill="none" stroke-linejoin="round">
        <defs>
          <marker id="dot" markerWidth="3" markerHeight="3" refX="1.5" refY="1.5" markerUnits="strokeWidth"><circle cx="1.5" cy="1.5" r="1" fill="#8fd0f5"/></marker>
        </defs>
        <g stroke="#8fd0f5" stroke-width="5" marker-start="url(#dot)" marker-mid="url(#dot)" marker-end="url(#dot)">
          <path d="M335 98 L440 98 Q510 110 510 160 Q505 225 430 227 L398 227 L398 298 L335 298"/>
          <path d="M400 140 L430 140 Q448 145 448 162 Q445 182 400 185 Z"/>
          <path d="M538 98 L645 98 Q720 110 725 160 Q722 195 680 212 Q705 225 740 298 L665 298 Q630 220 605 215 L603 298 L538 298 Z"/>
          <path d="M600 140 L640 140 Q662 148 660 165 Q650 182 600 182 Z"/>
          <path d="M758 98 L822 98 L822 298 L758 298 Z"/>
          <path d="M865 98 L925 98 L1000 212 L1000 98 L1060 98 L1060 298 L1000 298 L925 188 L925 298 L865 298 Z"/>
          <path d="M1083 98 L1277 98 L1277 148 L1212 148 L1212 298 L1148 298 L1148 148 L1083 148 Z"/>
        </g>
        <g stroke="#1c1c1c" stroke-width="5">
          <path d="M200 98 L165 96 C125 96 95 115 82 148 L135 157 C140 135 180 125 187 155 C188 175 165 180 145 180 L145 213 C170 213 195 225 190 245 C185 280 145 275 138 238 L80 248 C95 285 125 303 165 303 L200 300 Z"/>
          <path d="M200 98 L290 98 Q385 100 385 198 Q385 298 290 300 L200 300 Z"/>
          <path d="M260 140 L290 140 Q325 145 325 198 Q322 255 285 257 L260 257 Z"/>
        </g>
      </svg>
      <svg style="left:1253px;top:-10px" width="159" height="170" viewBox="0 0 477 510" fill="#e7f0f9" stroke="#737d86" stroke-width="3.5" stroke-linejoin="round">
        <path d="M263 55 L300 95 L228 95 Z"/>
        <path d="M107 218 L107 287 L68 252 Z"/><path d="M422 218 L422 287 L461 252 Z"/>
        <path d="M228 408 L300 408 L263 448 Z"/>
        <circle cx="435" cy="80" r="19"/>
        <path d="M212 75 Q170 85 135 115 L120 105 L115 157 L165 150 L150 135 Q180 112 215 98 Z"/>
        <path d="M314 75 Q356 85 391 115 L406 105 L411 157 L361 150 L376 135 Q346 112 311 98 Z"/>
        <path d="M188 157 L338 157 L358 177 L358 327 L338 347 L188 347 L168 327 L168 177 Z"/>
        <path d="M215 182 L313 182 L333 205 L333 300 L313 322 L215 322 L193 300 L193 205 Z"/>
        <path d="M188 157 L215 182 M338 157 L313 182 M358 177 L333 205 M168 177 L193 205 M168 327 L193 300 M188 347 L215 322 M358 327 L333 300 M338 347 L313 322" fill="none"/>
        <path d="M398 365 L430 378 L398 392 L367 378 Z"/><path d="M367 378 L398 392 V420 L367 408 Z"/><path d="M430 378 L398 392 V420 L430 408 Z"/>
        <text x="263" y="266" text-anchor="middle" font-size="40" fill="#7c8a94" stroke="none">TOP</text>
        <path d="M160 205 V355" stroke="#74ea6f" stroke-width="5" fill="none"/>
        <path d="M160 355 H312" stroke="#f0666a" stroke-width="5" fill="none"/>
      </svg>
      <svg style="left:1363px;top:600px" width="49" height="50" viewBox="0 0 49 50" fill="none">
        <path d="M16 38 V18" stroke="#1e7a2a" stroke-width="1.4"/><path d="M16 14 L19 21 H13 Z" fill="#2c8a37"/>
        <path d="M16 38 H34" stroke="#8a1c22" stroke-width="1.4"/><path d="M38 38 L31 35 V41 Z" fill="#962026"/>
        <circle cx="16" cy="38" r="2.4" fill="#22227a"/>
        <text x="19" y="13" font-size="9.5" font-weight="600" fill="#222" text-anchor="middle">Y</text>
        <text x="19" y="37" font-size="9.5" font-weight="600" fill="#222" text-anchor="middle">Z</text>
        <text x="43" y="38" font-size="9.5" font-weight="600" fill="#222" text-anchor="middle">X</text>
      </svg>`;
  }
}
customElements.define("fc-viewport", FcViewport);

class FcDocTabs extends HTMLElement {
  constructor() {
    super();
    this.attachShadow({ mode: "open" });
    this.shadowRoot.innerHTML = `
      <style>
        :host { display: flex; align-items: flex-start; gap: 1px; height: 50px; flex: none; position: relative; background: #efefef; }
        .wm { position: absolute; left: 1093px; top: 2px; color: #c6c6c6; font: 19px/26px "Noto Sans", sans-serif; white-space: nowrap; pointer-events: none; }
        .wm div + div { font-size: 14.4px; line-height: 20px; }
      </style>
      <slot></slot>
      <div class="wm"><div>Activate Windows</div><div>Go to Settings to activate Windows.</div></div>`;
  }
}
customElements.define("fc-doc-tabs", FcDocTabs);

class FcDocTab extends HTMLElement {
  connectedCallback() {
    const active = this.hasAttribute("active");
    this.attachShadow({ mode: "open" });
    this.shadowRoot.innerHTML = `
      <style>
        :host { display: flex; align-items: center; box-sizing: border-box; flex: none; width: ${active ? 199 : 121}px; height: ${active ? 48 : 43}px; padding: ${active ? "0 8px 0 8px" : "0 9px 0 9px"}; background: linear-gradient(${active ? "#fafafa 60%, #ededed" : "#e2e2e2, #d0d0d0"}); border: 1px solid #c0c0c0; border-top: 0; border-bottom: 2px solid #a8a8a8; border-right-width: 2px; border-radius: 0 0 3px 3px; font: 10.5px "Liberation Sans", sans-serif; color: ${active ? "#111" : "#666"}; }
        span { flex: 1; margin-left: ${active ? 15 : 13}px; white-space: nowrap; padding-top: 2px; }
      </style>
      <fc-icon name="${this.getAttribute("icon")}" size="${active ? 23 : 24}" box="${active ? 36 : 27}"></fc-icon>
      <span>${this.getAttribute("text")}</span>
      <fc-icon name="x" size="22" box="20"></fc-icon>`;
  }
}
customElements.define("fc-doc-tab", FcDocTab);

class FcStatusbar extends HTMLElement {
  constructor() {
    super();
    this.attachShadow({ mode: "open" });
    this.shadowRoot.innerHTML = `
      <style>
        :host { display: flex; align-items: flex-end; height: 37px; flex: none; overflow: hidden; font: 10.6px "Liberation Sans", sans-serif; color: #222; background: #efefef; }
        .msg { flex: 1; padding: 0 0 9px 3px; }
        .c { display: flex; align-items: center; box-sizing: border-box; border: 1px solid #b9b9b9; border-radius: 3px 3px 0 0; border-bottom: 0; background: linear-gradient(#f0f0f0, #fff); height: 33px; width: 134px; margin-left: 10px; padding-left: 4px; position: relative; }
        .a { position: absolute; width: 0; height: 0; border: 5px solid transparent; border-top: 6px solid #555; border-bottom: 0; right: 5px; top: 19px; }
        .sw { width: 20px; height: 20px; background: #3d74b5; }
        .d { height: 29px; width: 146px; margin: 0 5px 1px 11px; border-radius: 3px; border: 1px solid #b9b9b9; padding-left: 7px; background: #f6f6f6; font-size: 10.4px; }
        .d .a { top: 6px; right: 3px; }
      </style>
      <div class="msg">${this.getAttribute("text")}</div>
      <div class="c"><div class="sw"></div><div class="a"></div></div>
      <div class="c"><fc-icon name="mouse" size="19" box="19" style="margin-left:37px"></fc-icon><span style="margin-left:6px">CAD</span><div class="a"></div></div>
      <div class="c d">210.90 mm x 100.00 mm<div class="a"></div></div>`;
  }
}
customElements.define("fc-statusbar", FcStatusbar);
</script>
</body>
</html>
